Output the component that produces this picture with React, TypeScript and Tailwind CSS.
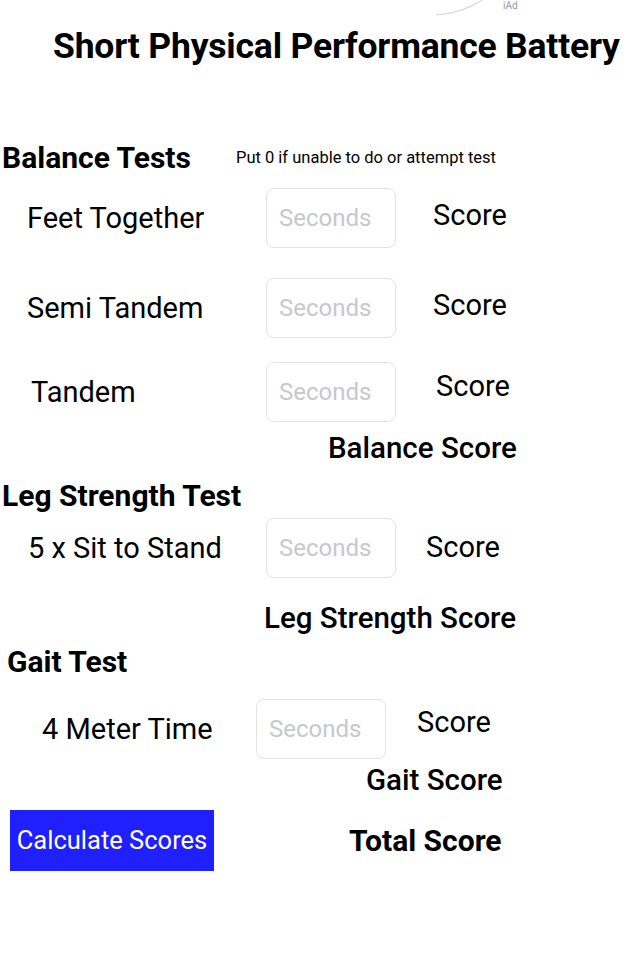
import React from "react";

const font = { fontFamily: "Roboto, 'Liberation Sans', sans-serif" };

const SecondsInput: React.FC = () => (
    <input
        type="text"
        placeholder="Seconds"
        className="h-[60px] w-[130px] shrink-0 rounded-lg border border-[#e3e3e6] bg-white px-3 text-[24px] text-black outline-none placeholder:text-[#c7c7cd]"
    />
);

const TestRow: React.FC<{
    label: string;
    labelPad: string;
    labelW: string;
    scorePad: string;
    scoreShift?: string;
    className?: string;
}> = ({ label, labelPad, labelW, scorePad, scoreShift = "", className = "" }) => (
    <div className={`flex h-[60px] items-center ${className}`}>
        <div className={`${labelW} ${labelPad} shrink-0 text-[29px] leading-none`}>{label}</div>
        <SecondsInput />
        <div className={`${scorePad} ${scoreShift} text-[29px] leading-none`}>Score</div>
    </div>
);

export default function App() {
    return (
        <div className="relative h-[960px] w-[640px] overflow-hidden bg-white text-black" style={font}>
            {/* cut-off ad banner corner */}
            <div className="pointer-events-none absolute left-[430px] top-0 flex h-[20px] items-start">
                <svg width="70" height="20" viewBox="0 0 70 20" fill="none">
                    <path d="M6 15 Q30 14 52 0" stroke="#d6d6d6" strokeWidth="1.2" />
                </svg>
                <span className="ml-[3px] mt-[1px] text-[10px] leading-none text-[#9a9a9a]">iAd</span>
            </div>

            <div className="flex flex-col pt-[26px]">
                <h1 className="ml-[53px] h-[40px] text-[35.5px] font-bold leading-[40px] tracking-[-0.2px]">
                    Short Physical Performance Battery
                </h1>

                <div className="mt-[74px] flex h-[36px] items-center">
                    <h2 className="w-[236px] pl-[2px] text-[30px] font-bold leading-none">Balance Tests</h2>
                    <span className="text-[16.5px] leading-none">Put 0 if unable to do or attempt test</span>
                </div>

                <TestRow className="mt-[12px]" label="Feet Together" labelW="w-[266px]" labelPad="pl-[27px]" scorePad="pl-[37px]" scoreShift="-mt-[6px]" />
                <TestRow className="mt-[30px]" label="Semi Tandem" labelW="w-[266px]" labelPad="pl-[27px]" scorePad="pl-[37px]" scoreShift="-mt-[6px]" />
                <TestRow className="mt-[24px]" label="Tandem" labelW="w-[266px]" labelPad="pl-[31px]" scorePad="pl-[40px]" scoreShift="-mt-[12px]" />

                <div className="mt-[8px] h-[36px] pl-[328px] text-[29.5px] font-medium leading-[36px]">Balance Score</div>

                <h2 className="mt-[12px] h-[36px] pl-[2px] text-[30px] font-bold leading-[36px]">Leg Strength Test</h2>

                <TestRow className="mt-[4px]" label="5 x Sit to Stand" labelW="w-[266px]" labelPad="pl-[28px]" scorePad="pl-[30px]" scoreShift="-mt-[2px]" />

                <div className="mt-[22px] h-[36px] pl-[264px] text-[29.5px] font-medium leading-[36px]">Leg Strength Score</div>

                <h2 className="mt-[8px] h-[36px] pl-[7px] text-[30px] font-bold leading-[36px]">Gait Test</h2>

                <TestRow className="mt-[19px]" label="4 Meter Time" labelW="w-[256px]" labelPad="pl-[42px]" scorePad="pl-[31px]" scoreShift="-mt-[14px]" />

                <div className="mt-[3px] h-[36px] pl-[366px] text-[29.5px] font-medium leading-[36px]">Gait Score</div>

                <div className="mt-[12px] flex items-center">
                    <button
                        type="button"
                        className="ml-[10px] h-[61px] w-[204px] bg-[#2020ff] text-[25.5px] leading-none text-white"
                    >
                        Calculate Scores
                    </button>
                    <div className="ml-[135px] text-[30px] font-bold leading-none">Total Score</div>
                </div>
            </div>
        </div>
    );
}
